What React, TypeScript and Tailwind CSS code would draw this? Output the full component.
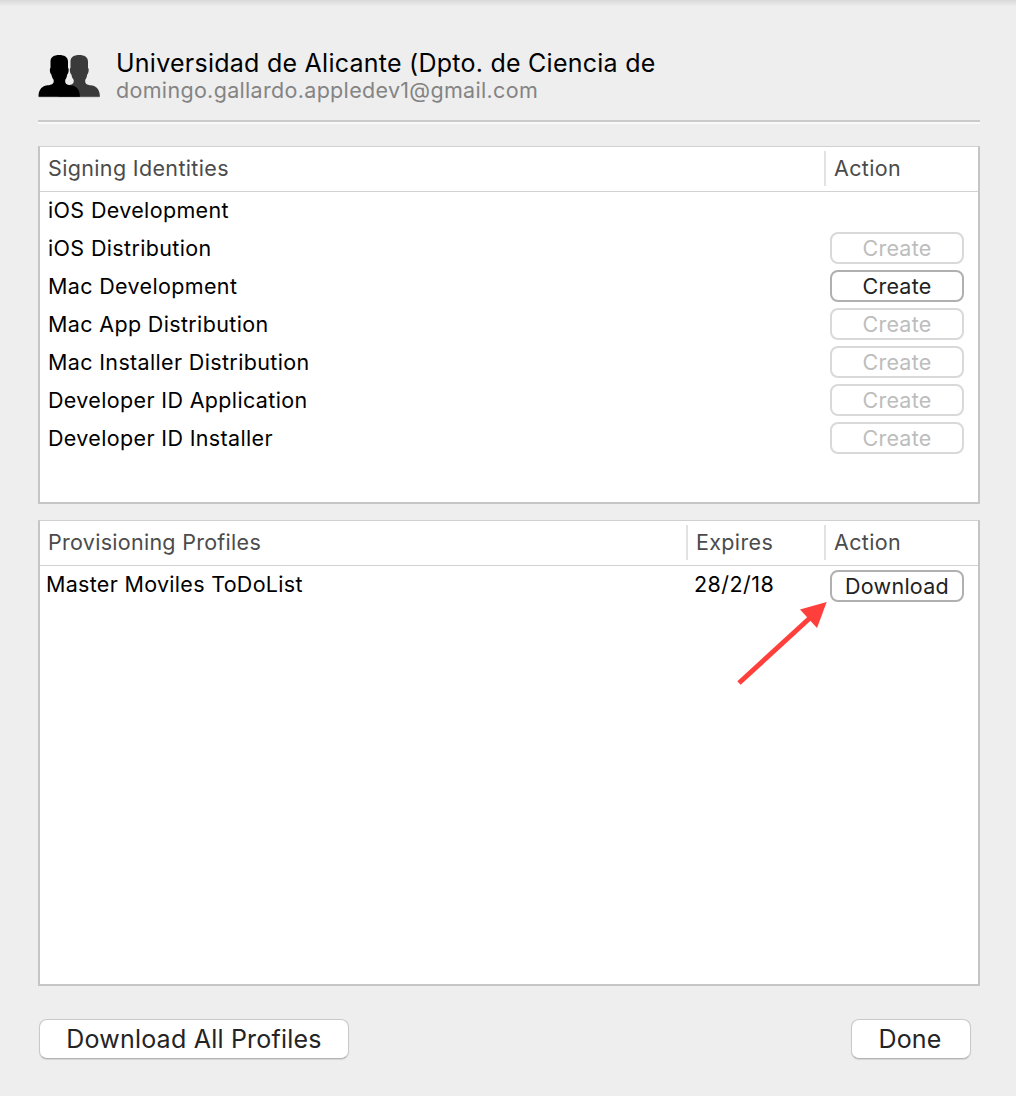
import type { ReactNode } from "react";

const identities: { name: string; action: "none" | "disabled" | "enabled" }[] = [
  { name: "iOS Development", action: "none" },
  { name: "iOS Distribution", action: "disabled" },
  { name: "Mac Development", action: "enabled" },
  { name: "Mac App Distribution", action: "disabled" },
  { name: "Mac Installer Distribution", action: "disabled" },
  { name: "Developer ID Application", action: "disabled" },
  { name: "Developer ID Installer", action: "disabled" },
];

const personPath =
  "M21 0C26 0 29.8 2 29.8 6.500V13C31 13.300 30.600 18.500 29 19.500C28.600 22 28 23.500 27 25V26.500C27 29.500 30 30 34 30.600C39.500 31.600 41.700 36.500 41.700 41.700H0.300C0.300 36.500 2.500 31.600 8 30.600C12 30 15.500 29.500 15.500 26.500V25C14.500 23.500 13.600 22 13.200 19.500C11.600 18.500 11.200 13.300 12.300 13V6.500C12.300 2 16 0 21 0Z";

function TeamIcon() {
  return (
    <svg className="h-11 w-[62px]" viewBox="0 0 62 44" aria-hidden="true">
      <path d="M1 42.800H61.500" stroke="#a8a8a8" strokeWidth="1" />
      <path d={personPath} transform="translate(20.200 1)" fill="#3a3a3a" />
      <path d={personPath} transform="translate(0.200 1)" fill="#000000" />
    </svg>
  );
}

function SmallButton({ children, disabled = false }: { children: ReactNode; disabled?: boolean }) {
  return (
    <button
      disabled={disabled}
      className="flex h-8 w-[134px] shrink-0 items-center justify-center rounded-[8px] border-2 border-[#b0b0b0] bg-white tracking-[0.25px] text-[#222222] disabled:border-[#d9d9d9] disabled:text-[#bdbdbd]"
    >
      {children}
    </button>
  );
}

function PushButton({ children, className }: { children: ReactNode; className: string }) {
  return (
    <button
      className={`flex h-10 items-center justify-center rounded-[8px] border border-[#c9c9c9] border-b-[#b2b2b2] bg-white text-[25px] text-[#242424] shadow-[0_1px_1px_rgba(0,0,0,0.1)] ${className}`}
    >
      {children}
    </button>
  );
}

function HeaderCell({ children, className }: { children: ReactNode; className: string }) {
  return (
    <div className={`flex h-[35px] items-center border-l-2 border-[#e2e2e2] pb-0.5 pl-2 ${className}`}>{children}</div>
  );
}

export default function App() {
  return (
    <main className="flex h-[1096px] w-[1016px] flex-col bg-[#eeeeee] font-['Inter',sans-serif] text-[21.5px] leading-[26px] tracking-[0.35px] text-black">
      <div className="h-1.5 shrink-0 bg-linear-to-b from-[#d9d9d9] to-[#ececec]" />

      <header className="mr-9 ml-[38px] flex h-[118px] shrink-0 items-start border-b-2 border-[#f9f9f9]">
        <div className="flex h-[116px] w-full items-start border-b-2 border-[#cacaca]">
          <div className="mt-12">
            <TeamIcon />
          </div>
          <div className="mt-[43px] ml-4 whitespace-nowrap">
            <h1 className="text-[25px] leading-7 tracking-[0.25px]">Universidad de Alicante (Dpto. de Ciencia de</h1>
            <p className="leading-[26px] tracking-[0.32px] text-[#848484]">domingo.gallardo.appledev1@gmail.com</p>
          </div>
        </div>
      </header>

      <section className="mr-9 ml-[38px] mt-[22px] h-[358px] shrink-0 border-2 border-t border-[#c5c5c5] border-t-[#d0d0d0] bg-white">
        <div className="flex h-[45px] items-start border-b border-[#d2d2d2] pt-1 text-[#4b4b4b]">
          <div className="flex h-[35px] flex-1 items-center pb-0.5 pl-2">Signing Identities</div>
          <HeaderCell className="w-[154px]">Action</HeaderCell>
        </div>
        <ul className="-mt-px">
          {identities.map(({ name, action }) => (
            <li key={name} className="flex h-[38px] items-center justify-between pr-3.5 pl-2">
              <span>{name}</span>
              {action !== "none" && <SmallButton disabled={action === "disabled"}>Create</SmallButton>}
            </li>
          ))}
        </ul>
      </section>

      <section className="relative mr-9 ml-[38px] mt-4 h-[466px] shrink-0 border-2 border-t border-[#c5c5c5] border-t-[#d0d0d0] bg-white">
        <div className="flex h-[45px] items-start border-b border-[#d2d2d2] pt-1 text-[#4b4b4b]">
          <div className="flex h-[35px] flex-1 items-center pb-0.5 pl-2 tracking-[0.28px]">Provisioning Profiles</div>
          <HeaderCell className="w-[138px]">Expires</HeaderCell>
          <HeaderCell className="w-[154px]">Action</HeaderCell>
        </div>
        <div className="flex pt-1">
          <span className="flex-1 pt-px pl-1.5 tracking-[0.3px]">Master Moviles ToDoList</span>
          <span className="w-[136px] pt-px tracking-[0.45px]">28/2/18</span>
          <div className="mr-3.5">
            <SmallButton>Download</SmallButton>
          </div>
        </div>
        <svg
          className="absolute top-[79px] left-[696px] h-[88px] w-[94px]"
          viewBox="0 0 94 88"
          fill="none"
          aria-hidden="true"
        >
          <path d="M3 83L75 17" stroke="#ff3f3b" strokeWidth="5" />
          <path d="M90.700 2L64 9.500L81 28Z" fill="#ff3f3b" />
        </svg>
      </section>

      <footer className="mt-[33px] flex shrink-0 justify-between pr-[45px] pl-[39px]">
        <PushButton className="w-[310px] tracking-[0.22px]">Download All Profiles</PushButton>
        <PushButton className="w-[120px] pr-0.5 tracking-[0.2px]">Done</PushButton>
      </footer>
    </main>
  );
}
